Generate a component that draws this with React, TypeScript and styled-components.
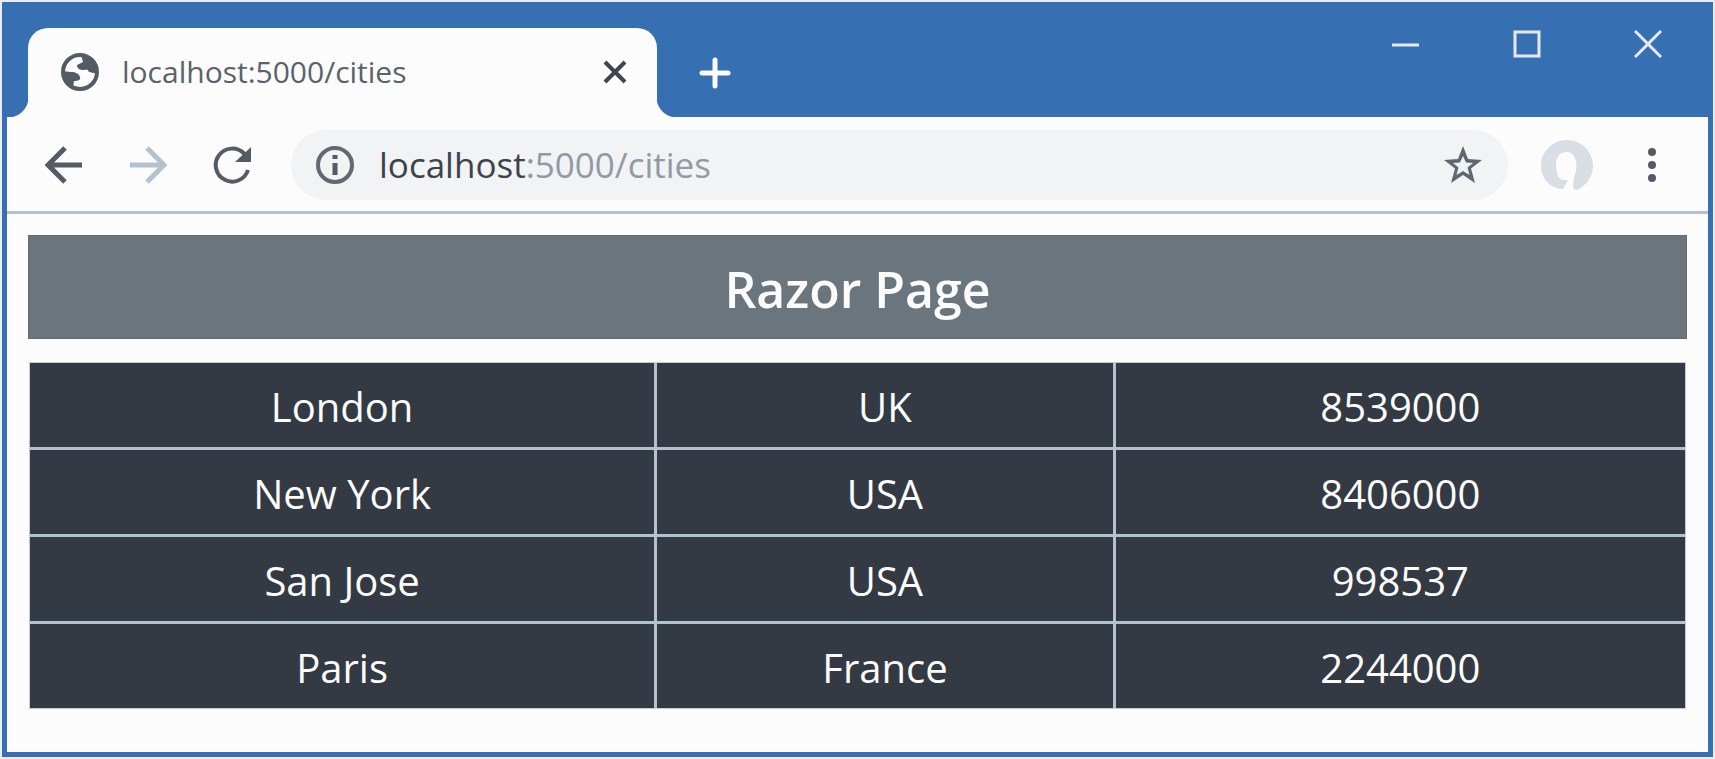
import React from "react";
import styled, { createGlobalStyle, css } from "styled-components";

const GlobalStyle = createGlobalStyle`
  *, *::before, *::after { box-sizing: border-box; }
  body {
    margin: 0;
    background: #e9edf3;
    font-family: "Open Sans", "Noto Sans", sans-serif;
  }
`;

const BrowserWindow = styled.div`
  display: flex;
  flex-direction: column;
  min-height: calc(100vh - 4px);
  margin: 2px;
  border: solid #3670b3;
  border-width: 0 5px 5px;
  background: #fcfcfc;
`;

const TitleBar = styled.header`
  display: flex;
  justify-content: space-between;
  align-items: flex-start;
  height: 115px;
  background: #3670b3;
`;

const TabStrip = styled.div`
  display: flex;
  align-items: center;
  padding-top: 26px;
  padding-left: 21px;
`;

const Tab = styled.div`
  position: relative;
  display: flex;
  align-items: center;
  width: 629px;
  height: 89px;
  padding: 0 22px 2px 33px;
  border-radius: 20px 20px 0 0;
  background: #fcfcfc;

  &::before,
  &::after {
    content: "";
    position: absolute;
    bottom: 0;
    width: 20px;
    height: 20px;
  }
  &::before {
    right: 100%;
    background: radial-gradient(circle at 0 0, transparent 20px, #fcfcfc 21px);
  }
  &::after {
    left: 100%;
    background: radial-gradient(circle at 100% 0, transparent 20px, #fcfcfc 21px);
  }
`;

const TabTitle = styled.span`
  flex: 1;
  padding-left: 23px;
  color: #5a626c;
  font-size: 30px;
  line-height: 40px;
`;

const IconButton = styled.button<{ $width: number; $height?: number }>`
  display: flex;
  flex: none;
  align-items: center;
  justify-content: center;
  width: ${(p) => p.$width}px;
  height: ${(p) => p.$height ?? 60}px;
  padding: 0;
  border: 0;
  background: none;
`;

const NewTabButton = styled(IconButton)`
  margin-left: 28px;
`;

const WindowControls = styled.div`
  display: flex;
  padding-top: 12px;
`;

const Toolbar = styled.nav`
  display: flex;
  align-items: center;
  padding: 13px 30px 11px 15px;
  border-bottom: 3px solid #b4c1d0;
`;

const AddressBar = styled.form`
  display: flex;
  flex: 1;
  align-items: center;
  height: 70px;
  margin-left: 17px;
  padding-right: 15px;
  border-radius: 35px;
  background: #f1f3f5;
`;

const AddressField = styled.div`
  position: relative;
  display: flex;
  flex: 1;
  align-items: center;
  height: 70px;
`;

const addressText = css`
  font-family: inherit;
  font-size: 35px;
  line-height: 48px;
`;

const AddressInput = styled.input`
  ${addressText}
  width: 100%;
  padding: 0;
  border: 0;
  outline: 0;
  background: none;
  color: transparent;
  caret-color: #3c434c;
`;

const AddressDisplay = styled.div`
  ${addressText}
  position: absolute;
  left: 0;
  color: #929aa4;
  pointer-events: none;
`;

const Host = styled.span`
  color: #3c434c;
`;

const Page = styled.main`
  padding: 21px 21px 42px;
`;

const Heading = styled.h1`
  margin: 0 0 24px;
  padding: 22px 20px 18px;
  border: 1px solid #626b74;
  background: #6b757d;
  color: #fcfcfc;
  font-size: 50px;
  font-weight: 600;
  line-height: 62px;
  text-align: center;
`;

const TableFrame = styled.div`
  padding: 0 2px;
`;

const CityTable = styled.table`
  width: 100%;
  border-collapse: separate;
  border-spacing: 0;
  table-layout: fixed;
  outline: 1px solid #c3cbd4;
`;

const Column = styled.col<{ $share: string }>`
  width: ${(p) => p.$share};
`;

const Cell = styled.td`
  padding: 14px 12px 10px;
  border: solid #b4c1cf;
  border-width: 0 3px 3px 0;
  background: #333a43;
  color: #fcfcfc;
  font-size: 40px;
  line-height: 60px;
  text-align: center;

  &:last-child { border-right-width: 0; }
  tr:last-child > & { border-bottom-width: 0; }
`;

const cities = [
  { name: "London", country: "UK", population: 8539000 },
  { name: "New York", country: "USA", population: 8406000 },
  { name: "San Jose", country: "USA", population: 998537 },
  { name: "Paris", country: "France", population: 2244000 },
];

const GlobeIcon = () => (
  <svg width="38" height="38" viewBox="0 0 38 38" aria-hidden="true">
    <circle cx="19" cy="19" r="17" fill="#fcfcfc" stroke="#555b64" strokeWidth="4" />
    <path
      fill="#555b64"
      d="M20 2C30 2 37 10 37 21L28 19C27 16 25 16 23 17C19 17 16 16 16 12L22 9Z M1 18L10 19C15 19 18 21 19 24C20 27 17 28 13 28L12 35C5 32 1 26 1 18Z"
    />
  </svg>
);

const ArrowIcon = ({ forward = false }: { forward?: boolean }) => (
  <svg
    width="38"
    height="38"
    viewBox="0 0 38 38"
    fill="none"
    stroke={forward ? "#b4c1d0" : "#555b64"}
    strokeWidth="5"
    aria-hidden="true"
  >
    <path d={forward ? "M1 19H34M18 2L35 19L18 36" : "M37 19H4M20 2L3 19L20 36"} />
  </svg>
);

const ReloadIcon = () => (
  <svg width="38" height="38" viewBox="0 0 38 38" aria-hidden="true">
    <path d="M35 24A16.500 16.500 0 1 1 31 7.500L34 11" fill="none" stroke="#555b64" strokeWidth="4" />
    <path d="M38 1V16H22Z" fill="#555b64" />
  </svg>
);

const InfoIcon = () => (
  <svg width="38" height="38" viewBox="0 0 38 38" aria-hidden="true">
    <circle cx="19" cy="19" r="17" fill="none" stroke="#626973" strokeWidth="4" />
    <path d="M19 9V13M19 17V29" stroke="#555b64" strokeWidth="5" />
  </svg>
);

const StarIcon = () => (
  <svg width="38" height="38" viewBox="0 0 38 38" aria-hidden="true">
    <path
      d="M19 0L24 13L38 14L27 22.500L31 37L19 29L7 37L11 22.500L0 14L14 13Z M19 10L16 16.500L9 17L14.500 21.500L12.500 29L19 25L25.500 29L23.500 21.500L29 17L22 16.500Z"
      fill="#5f6771"
      fillRule="evenodd"
    />
  </svg>
);

const ProfileIcon = () => (
  <svg width="52" height="52" viewBox="0 0 52 52" aria-hidden="true">
    <path
      fill="#d9dee5"
      d="M26 1C40 1 52 12 52 27C52 38 45 47 36 51L33 50C31 46 33 42 33 38C37 31 37 13 26 13C15 13 14 24 16 33C17 40 20 41 25 41C29 41 24 46 22 50C10 50 0 40 0 27C0 12 12 1 26 1Z"
    />
  </svg>
);

const MenuIcon = () => (
  <svg width="10" height="36" viewBox="0 0 10 36" fill="#555b64" aria-hidden="true">
    <circle cx="5" cy="5" r="4" />
    <circle cx="5" cy="18" r="4" />
    <circle cx="5" cy="31" r="4" />
  </svg>
);

const CloseTabIcon = () => (
  <svg width="24" height="24" viewBox="0 0 24 24" stroke="#3f464f" strokeWidth="4" aria-hidden="true">
    <path d="M2 2L22 22M22 2L2 22" />
  </svg>
);

const PlusIcon = () => (
  <svg width="32" height="32" viewBox="0 0 32 32" stroke="#fcfcfc" strokeWidth="5" strokeLinecap="round" aria-hidden="true">
    <path d="M16 3V29M3 16H29" />
  </svg>
);

const controlPaths = {
  Minimize: "M0 15H27",
  Maximize: "M2 2H26V26H2Z",
  Close: "M1 1L27 27M27 1L1 27",
};

export default function App() {
  return (
    <>
      <GlobalStyle />
      <BrowserWindow>
        <TitleBar>
          <TabStrip>
            <Tab>
              <GlobeIcon />
              <TabTitle>localhost:5000/cities</TabTitle>
              <IconButton type="button" $width={40} $height={40} aria-label="Close tab">
                <CloseTabIcon />
              </IconButton>
            </Tab>
            <NewTabButton type="button" $width={60} aria-label="New tab">
              <PlusIcon />
            </NewTabButton>
          </TabStrip>
          <WindowControls>
            {Object.entries(controlPaths).map(([label, path]) => (
              <IconButton key={label} type="button" $width={121} aria-label={label}>
                <svg width="28" height="28" viewBox="0 0 28 28" fill="none" stroke="#e6eaf0" strokeWidth="3" aria-hidden="true">
                  <path d={path} />
                </svg>
              </IconButton>
            ))}
          </WindowControls>
        </TitleBar>
        <Toolbar aria-label="Browser toolbar">
          <IconButton type="button" $width={84} aria-label="Back">
            <ArrowIcon />
          </IconButton>
          <IconButton type="button" $width={84} aria-label="Forward">
            <ArrowIcon forward />
          </IconButton>
          <IconButton type="button" $width={84} aria-label="Reload">
            <ReloadIcon />
          </IconButton>
          <AddressBar onSubmit={(e) => e.preventDefault()}>
            <IconButton type="button" $width={88} aria-label="Site information">
              <InfoIcon />
            </IconButton>
            <AddressField>
              <AddressInput aria-label="Address" defaultValue="localhost:5000/cities" readOnly />
              <AddressDisplay aria-hidden="true">
                <Host>localhost</Host>:5000/cities
              </AddressDisplay>
            </AddressField>
            <IconButton type="button" $width={60} aria-label="Bookmark this page">
              <StarIcon />
            </IconButton>
          </AddressBar>
          <IconButton type="button" $width={118} aria-label="Profile">
            <ProfileIcon />
          </IconButton>
          <IconButton type="button" $width={52} aria-label="Menu">
            <MenuIcon />
          </IconButton>
        </Toolbar>
        <Page>
          <Heading>Razor Page</Heading>
          <TableFrame>
            <CityTable>
              <colgroup>
                <Column $share="37.900%" />
                <Column $share="27.700%" />
                <Column $share="34.400%" />
              </colgroup>
              <tbody>
                {cities.map((city) => (
                  <tr key={city.name}>
                    <Cell>{city.name}</Cell>
                    <Cell>{city.country}</Cell>
                    <Cell>{city.population}</Cell>
                  </tr>
                ))}
              </tbody>
            </CityTable>
          </TableFrame>
        </Page>
      </BrowserWindow>
    </>
  );
}
